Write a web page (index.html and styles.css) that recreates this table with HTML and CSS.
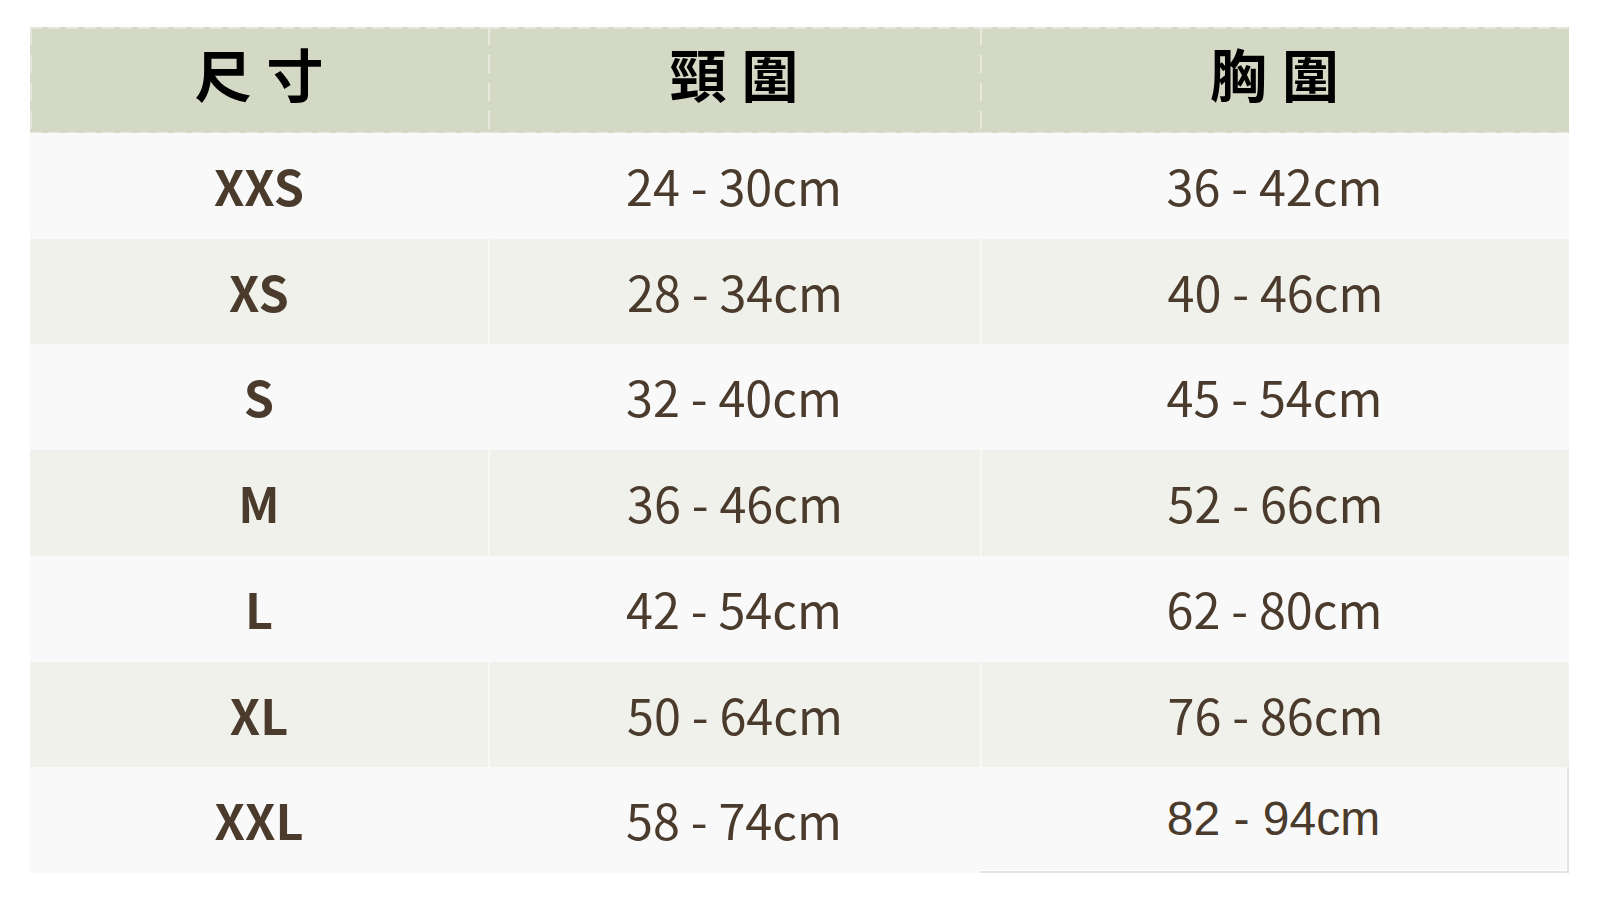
FILE: index.html
```html
<!DOCTYPE html>
<html lang="zh-Hant">
<head>
<meta charset="utf-8">
<title>尺寸表</title>
<link rel="stylesheet" href="styles.css">
</head>
<body>
<div class="page">
  <div class="size-table">
    <div class="cell head first">尺 寸</div>
    <div class="cell head">頸 圍</div>
    <div class="cell head">胸 圍</div>

    <div class="cell odd size">XXS</div>
    <div class="cell odd">24 - 30cm</div>
    <div class="cell odd">36 - 42cm</div>

    <div class="cell even size">XS</div>
    <div class="cell even div">28 - 34cm</div>
    <div class="cell even div">40 - 46cm</div>

    <div class="cell odd size">S</div>
    <div class="cell odd">32 - 40cm</div>
    <div class="cell odd">45 - 54cm</div>

    <div class="cell even size">M</div>
    <div class="cell even div">36 - 46cm</div>
    <div class="cell even div">52 - 66cm</div>

    <div class="cell odd size">L</div>
    <div class="cell odd">42 - 54cm</div>
    <div class="cell odd">62 - 80cm</div>

    <div class="cell even size">XL</div>
    <div class="cell even div">50 - 64cm</div>
    <div class="cell even div">76 - 86cm</div>

    <div class="cell odd size">XXL</div>
    <div class="cell odd">58 - 74cm</div>
    <div class="cell odd last">82 - 94cm</div>
  </div>
</div>
</body>
</html>
```

FILE: styles.css
```css
html, body {
  margin: 0;
  padding: 0;
  background: #ffffff;
}

.page {
  padding: 27px 0 0 30px;
}

.size-table {
  display: grid;
  grid-template-columns: 458px 492px 589px;
  grid-auto-rows: 105.75px;
  font-family: "Noto Sans CJK TC", "Noto Sans", sans-serif;
  color: #4a3b2d;
}

.cell {
  display: flex;
  align-items: center;
  justify-content: center;
  font-size: 48.5px;
  line-height: 1;
  position: relative;
  box-sizing: border-box;
}

.head {
  background: #d4d9c5;
  color: #000000;
  font-weight: 700;
  font-size: 57px;
  word-spacing: 2px;
  padding-bottom: 14px;
}

/* dashed top & bottom lines on header */
.head::before {
  content: "";
  position: absolute;
  left: 0;
  right: 0;
  top: 0;
  height: 2px;
  background: repeating-linear-gradient(to right, #e4e7dc 0 12px, transparent 12px 18px);
}

.head::after {
  content: "";
  position: absolute;
  left: 0;
  right: 0;
  bottom: -1px;
  height: 2px;
  background: repeating-linear-gradient(to right, #e6e8e0 0 12px, transparent 12px 18px);
}

/* dashed vertical dividers */
.head:not(.first) {
  background-image: repeating-linear-gradient(to bottom, #e8eadf 0 18px, transparent 18px 28px);
  background-size: 2px 100%;
  background-repeat: no-repeat;
  background-position: 0 0;
  background-color: #d4d9c5;
}

.head.first {
  background-image: repeating-linear-gradient(to bottom, #e2e5da 0 18px, transparent 18px 28px);
  background-size: 2px 100%;
  background-repeat: no-repeat;
  background-position: 0 0;
}

.odd {
  background: #f9f9f9;
}

.even {
  background: #f0f1ea;
}

.even.div {
  border-left: 2px solid #f8f8f4;
}

.cell:not(.head) {
  padding-bottom: 1px;
}

.size {
  font-weight: 700;
}

.last {
  font-family: "Liberation Sans", Arial, sans-serif;
  font-size: 48px;
  border-right: 2px solid #e2e2e2;
  border-bottom: 2px solid #e2e2e2;
  box-shadow: inset -1px -1px 0 #ffffff;
  padding-bottom: 6px;
}
```
